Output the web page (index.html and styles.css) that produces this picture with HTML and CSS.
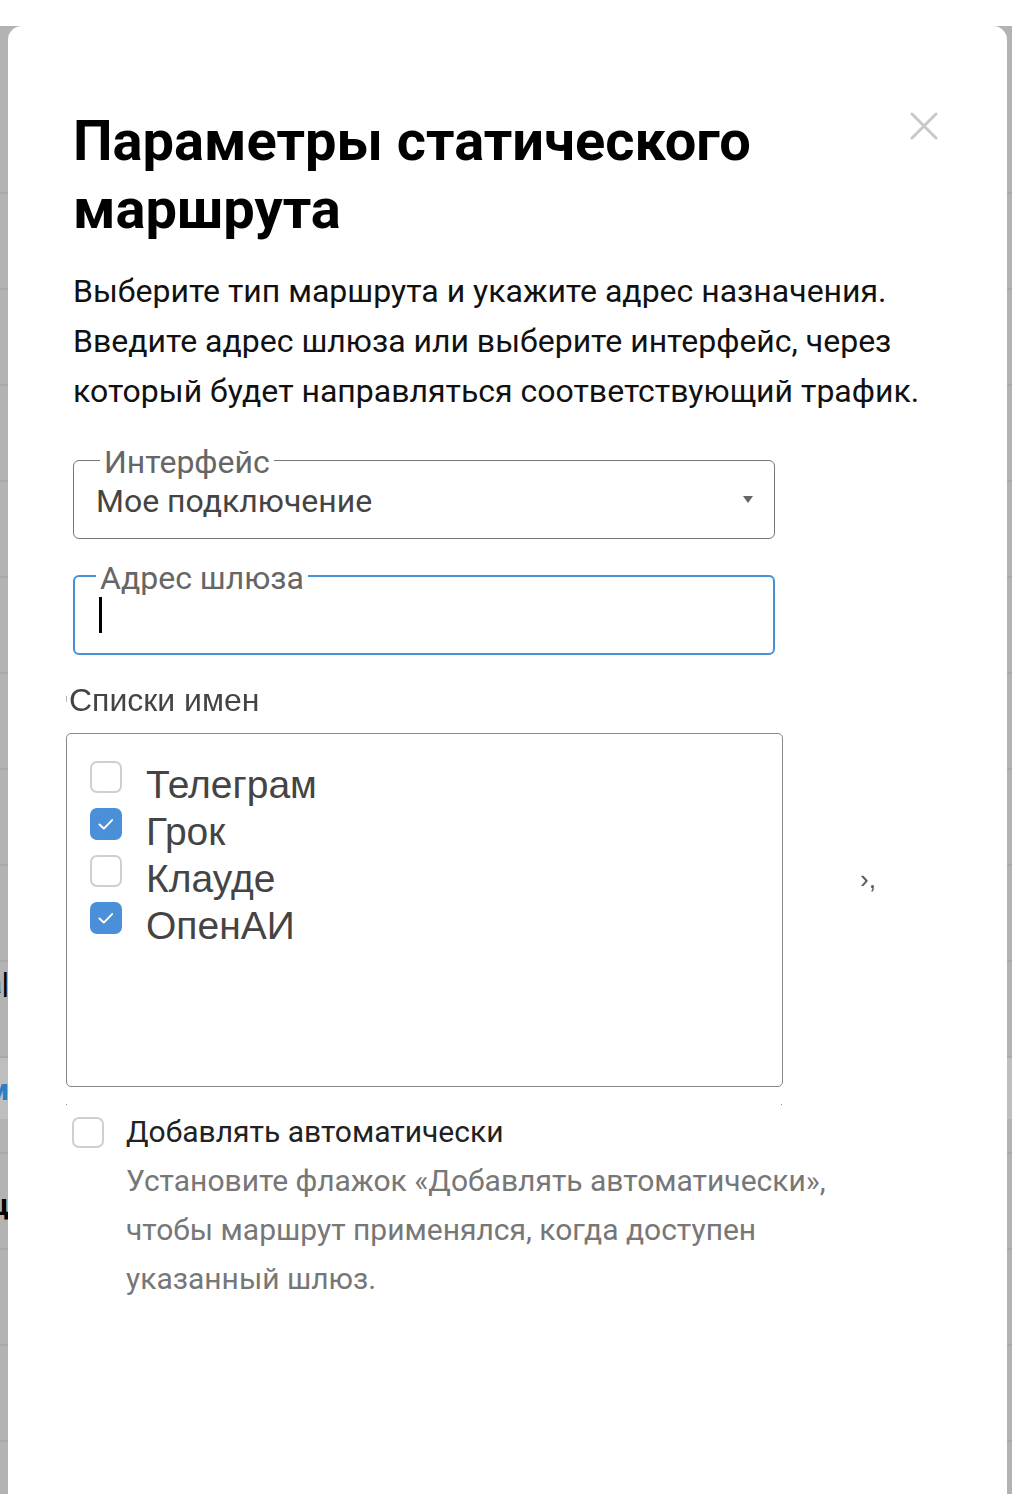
FILE: index.html
```html
<!DOCTYPE html>
<html lang="ru">
<head>
<meta charset="utf-8">
<title>Параметры статического маршрута</title>
<link rel="stylesheet" href="styles.css">
</head>
<body>
<div class="under">
  <div class="row row-first"></div>
  <div class="row"></div>
  <div class="row"></div>
  <div class="row"></div>
  <div class="row"></div>
  <div class="row"></div>
  <div class="row"></div>
  <div class="row"></div>
  <div class="row"></div>
  <div class="row"><span class="ghost ghost-a">на|</span></div>
  <div class="row row-hl"><span class="ghost ghost-m">им</span></div>
  <div class="row"><span class="ghost ghost-c">ац</span></div>
  <div class="row"></div>
  <div class="row"></div>
  <div class="row"></div>
</div>

<div class="modal">
  <button class="close" aria-label="Закрыть">
    <svg width="28" height="28" viewBox="0 0 28 28"><path d="M2 2 L26 26 M26 2 L2 26" stroke="#c8c8c8" stroke-width="3" stroke-linecap="round" fill="none"/></svg>
  </button>
  <h1 class="title">Параметры статического маршрута</h1>
  <p class="lead">Выберите тип маршрута и укажите адрес назначения. Введите адрес шлюза или выберите интерфейс, через который будет направляться соответствующий трафик.</p>

  <fieldset class="field field-select">
    <legend><span>Интерфейс</span></legend>
    <div class="value">Мое подключение</div>
    <span class="arrow"></span>
  </fieldset>

  <fieldset class="field field-focus">
    <legend><span>Адрес шлюза</span></legend>
    <div class="value value-empty"><span class="caret"></span></div>
  </fieldset>

  <div class="lists-label">Списки имен</div>
  <div class="lists">
    <label class="item"><span class="cb"></span><span>Телеграм</span></label>
    <label class="item"><span class="cb cb-on"><svg viewBox="0 0 32 32" width="32" height="32"><path d="M8.5 16.5 L13.5 21.2 L23 11.5" stroke="#fff" stroke-width="2.2" fill="none" stroke-linecap="round" stroke-linejoin="round"/></svg></span><span>Грок</span></label>
    <label class="item"><span class="cb"></span><span>Клауде</span></label>
    <label class="item"><span class="cb cb-on"><svg viewBox="0 0 32 32" width="32" height="32"><path d="M8.5 16.5 L13.5 21.2 L23 11.5" stroke="#fff" stroke-width="2.2" fill="none" stroke-linecap="round" stroke-linejoin="round"/></svg></span><span>ОпенАИ</span></label>
  </div>
  <span class="stray">›,</span>

  <div class="auto">
    <span class="cb cb-auto"></span>
    <div class="auto-text">
      <div class="auto-label">Добавлять автоматически</div>
      <div class="auto-help">Установите флажок «Добавлять автоматически», чтобы маршрут применялся, когда доступен указанный шлюз.</div>
    </div>
  </div>
</div>
</body>
</html>
```

FILE: styles.css
```css
html, body {
  margin: 0;
  padding: 0;
  background: #ffffff;
  height: 100%;
  overflow: hidden;
}

.under {
  margin-top: 26px;
  background: #b3b3b3;
  min-height: 1468px;
}

.row {
  height: 94px;
  border-bottom: 2px solid #a9a9a9;
  position: relative;
  overflow: hidden;
}

.row-first {
  height: 166px;
}

.row-hl {
  background: linear-gradient(#bebebe 0, #bebebe 61px, transparent 61px);
}

.ghost {
  position: absolute;
  right: calc(100% - 9px);
  font-family: "Roboto", sans-serif;
  font-weight: 700;
  font-size: 30px;
  line-height: 34px;
  color: #000;
  white-space: nowrap;
}

.ghost-a { top: 4px; }
.ghost-m { top: 15px; color: #2f7ec4; }
.ghost-c { top: 34px; }

.modal {
  position: fixed;
  left: 8px;
  top: 26px;
  right: 5px;
  bottom: 0;
  background: #ffffff;
  border-radius: 14px 14px 0 0;
  padding: 81px 0 0 65px;
  box-sizing: border-box;
  font-family: "Roboto", sans-serif;
}

.close {
  position: absolute;
  top: 86px;
  left: 902px;
  width: 28px;
  height: 28px;
  padding: 0;
  border: 0;
  background: none;
}

.close svg { display: block; }

.title {
  margin: 0;
  font-size: 56px;
  line-height: 68px;
  font-weight: 700;
  color: #000;
  width: 800px;
}

.lead {
  margin: 23px 0 0;
  font-size: 32px;
  line-height: 50px;
  color: #111;
  width: 880px;
}

.field {
  margin: 0;
  padding: 0 22px;
  width: 702px;
  box-sizing: border-box;
  border-radius: 6px;
  position: relative;
}

.field legend {
  padding: 0 4px;
  margin-left: 4px;
  font-size: 32px;
  line-height: 30px;
  color: #666;
}

.field legend span {
  position: relative;
  top: 2px;
}

.field-select {
  margin-top: 29px;
  border: 1.5px solid #777;
  padding-bottom: 17px;
}

.field-focus {
  margin-top: 22px;
  border: 2px solid #4a90d9;
  padding-bottom: 20px;
}

.field-focus legend { margin-left: -1px; }

.value {
  font-size: 32px;
  line-height: 40px;
  color: #444;
  padding-top: 6px;
}

.value-empty {
  height: 36px;
  padding-top: 6px;
}

.arrow {
  position: absolute;
  right: 21px;
  top: 21px;
  width: 0;
  height: 0;
  border-left: 5px solid transparent;
  border-right: 5px solid transparent;
  border-top: 7px solid #666;
}

.caret {
  display: block;
  width: 3px;
  height: 36px;
  background: #000;
  margin-left: 2px;
}

.lists-label {
  margin: 25px 0 0 -4px;
  font-family: "Liberation Sans", Arial, sans-serif;
  font-size: 32px;
  line-height: 40px;
  color: #444;
  position: relative;
}

.lists-label::before {
  content: "";
  position: absolute;
  left: -3px;
  top: 16px;
  width: 1px;
  height: 6px;
  background: #bbb;
}

.lists {
  margin: 13px 0 0 -7px;
  width: 717px;
  height: 354px;
  box-sizing: border-box;
  border: 1.5px solid #888;
  border-radius: 5px;
  padding: 27px 0 0 23px;
  display: flex;
  flex-direction: column;
  position: relative;
}

.lists::before,
.lists::after {
  content: "";
  position: absolute;
  bottom: -19px;
  width: 1px;
  height: 1px;
  background: #999;
}

.lists::before { left: -1px; }
.lists::after { right: 0; }

.item {
  display: flex;
  align-items: flex-start;
  gap: 24px;
  height: 47px;
  line-height: 47px;
  font-family: "Liberation Sans", Arial, sans-serif;
  font-size: 39px;
  color: #444;
}

.cb {
  width: 32px;
  height: 32px;
  box-sizing: border-box;
  border: 2px solid #cfcfcf;
  border-radius: 7px;
  background: #fff;
  flex: none;
  display: flex;
  align-items: center;
  justify-content: center;
}

.cb-on {
  background: #4a90d9;
  border-color: #4a90d9;
}

.cb svg { display: block; }

.stray {
  position: absolute;
  left: 852px;
  top: 838px;
  font-size: 26px;
  color: #555;
  font-family: "Liberation Sans", Arial, sans-serif;
}

.auto {
  display: flex;
  gap: 22px;
  margin-top: 29px;
  margin-left: -1px;
}

.cb-auto {
  width: 32px;
  height: 31px;
  margin-top: 1px;
}

.auto-label {
  font-size: 30px;
  line-height: 32px;
  color: #222;
}

.auto-help {
  margin-top: 8px;
  font-size: 30px;
  line-height: 49px;
  color: #777;
  width: 730px;
}
```
